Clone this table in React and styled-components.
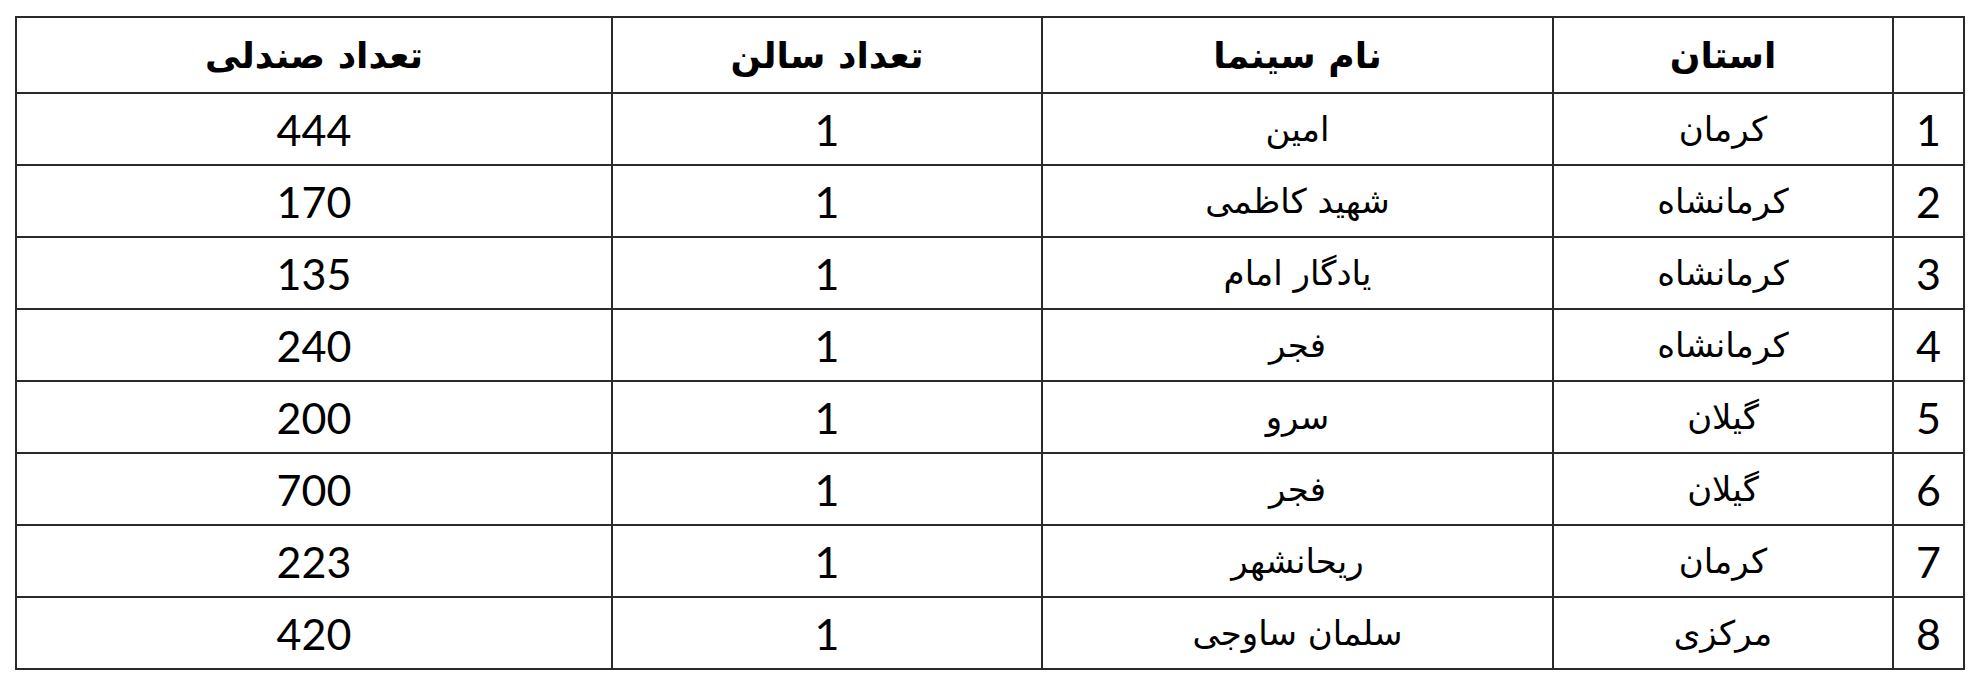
import React from "react";
import styled, { createGlobalStyle } from "styled-components";

const GlobalStyle = createGlobalStyle`
  html, body {
    margin: 0;
    padding: 0;
    background: #ffffff;
  }
  body {
    font-family: Lato, "DejaVu Sans", sans-serif;
    color: #000;
  }
`;

const Page = styled.div`
  padding: 16px 0 0 15px;
`;

const Table = styled.table`
  direction: rtl;
  width: 1950px;
  table-layout: fixed;
  border-collapse: collapse;
  border: 2px solid #000;
`;

const HeadCell = styled.th`
  height: 74px;
  padding: 0;
  border: 2px solid #2a2a2a;
  font-family: "DejaVu Sans", sans-serif;
  font-weight: 700;
  font-size: 36px;
  text-align: center;
  vertical-align: middle;
`;

const Cell = styled.td`
  height: 70px;
  padding: 0;
  border: 2px solid #2a2a2a;
  text-align: center;
  vertical-align: middle;
  font-family: ${({ $num }) =>
    $num ? 'Lato, "DejaVu Sans", sans-serif' : '"DejaVu Sans", sans-serif'};
  font-size: ${({ $num }) => ($num ? "43px" : "34px")};
`;

const columns = [
  { key: "idx", title: "", width: 71 },
  { key: "province", title: "استان", width: 340 },
  { key: "name", title: "نام سینما", width: 511 },
  { key: "halls", title: "تعداد سالن", width: 430 },
  { key: "seats", title: "تعداد صندلی", width: 596 },
];

const rows = [
  ["1", "کرمان", "امین", "1", "444"],
  ["2", "کرمانشاه", "شهید کاظمی", "1", "170"],
  ["3", "کرمانشاه", "یادگار امام", "1", "135"],
  ["4", "کرمانشاه", "فجر", "1", "240"],
  ["5", "گیلان", "سرو", "1", "200"],
  ["6", "گیلان", "فجر", "1", "700"],
  ["7", "کرمان", "ریحانشهر", "1", "223"],
  ["8", "مرکزی", "سلمان ساوجی", "1", "420"],
];

const numericCols = [0, 3, 4];

export default function App() {
  return (
    <>
      <GlobalStyle />
      <Page>
        <Table>
          <colgroup>
            {columns.map((c) => (
              <col key={c.key} style={{ width: c.width }} />
            ))}
          </colgroup>
          <thead>
            <tr>
              {columns.map((c) => (
                <HeadCell key={c.key}>{c.title}</HeadCell>
              ))}
            </tr>
          </thead>
          <tbody>
            {rows.map((r, i) => (
              <tr key={i}>
                {r.map((v, j) => (
                  <Cell key={j} $num={numericCols.includes(j)}>
                    {v}
                  </Cell>
                ))}
              </tr>
            ))}
          </tbody>
        </Table>
      </Page>
    </>
  );
}
